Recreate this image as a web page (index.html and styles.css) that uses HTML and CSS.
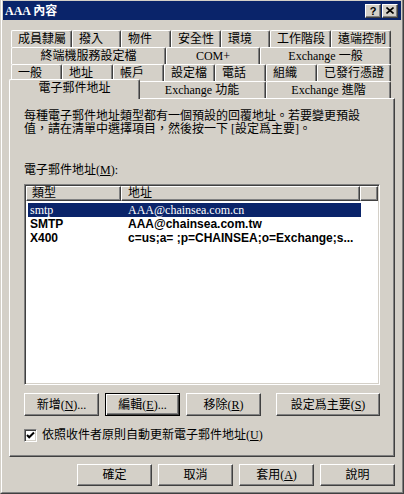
FILE: index.html
```html
<!DOCTYPE html>
<html lang="zh-Hant">
<head>
    <meta charset="UTF-8">
    <meta name="viewport" content="width=device-width, initial-scale=1.0">
    <title>AAA 內容</title>
    <link rel="stylesheet" href="styles.css">
</head>
<body>
    <div class="window">
        <div class="frame">
            <div class="titlebar">
                <span class="title">AAA 內容</span>
                <div class="caption-buttons">
                    <span class="cap-btn help">?</span>
                    <span class="cap-btn close">
                        <svg width="8" height="7" viewBox="0 0 8 7"><path d="M0.5 0.5L7.5 6.5M7.5 0.5L0.5 6.5" stroke="#000" stroke-width="1.6" fill="none"/></svg>
                    </span>
                </div>
            </div>

            <div class="content">
                <div class="tabs">
                    <div class="tab-row row-1">
                        <div class="tab">成員隸屬</div>
                        <div class="tab">撥入</div>
                        <div class="tab">物件</div>
                        <div class="tab">安全性</div>
                        <div class="tab">環境</div>
                        <div class="tab">工作階段</div>
                        <div class="tab">遠端控制</div>
                    </div>
                    <div class="tab-row row-2">
                        <div class="tab">終端機服務設定檔</div>
                        <div class="tab">COM+</div>
                        <div class="tab">Exchange 一般</div>
                    </div>
                    <div class="tab-row row-3">
                        <div class="tab">一般</div>
                        <div class="tab">地址</div>
                        <div class="tab">帳戶</div>
                        <div class="tab">設定檔</div>
                        <div class="tab">電話</div>
                        <div class="tab">組織</div>
                        <div class="tab">已發行憑證</div>
                    </div>
                    <div class="tab-row row-4">
                        <div class="tab active">電子郵件地址</div>
                        <div class="tab">Exchange 功能</div>
                        <div class="tab">Exchange 進階</div>
                    </div>
                </div>

                <div class="panel">
                    <p class="desc">每種電子郵件地址類型都有一個預設的回覆地址。若要變更預設<br>值，請在清單中選擇項目，然後按一下 [設定爲主要]。</p>

                    <div class="field-label">電子郵件地址(<u>M</u>):</div>

                    <div class="listview">
                        <div class="lv-header">
                            <div class="lv-col col-type">類型</div>
                            <div class="lv-col col-addr">地址</div>
                            <div class="lv-col col-fill"></div>
                        </div>
                        <div class="lv-body">
                            <div class="lv-row selected">
                                <span class="cell">smtp</span>
                                <span class="cell">AAA@chainsea.com.cn</span>
                            </div>
                            <div class="lv-row primary">
                                <span class="cell">SMTP</span>
                                <span class="cell">AAA@chainsea.com.tw</span>
                            </div>
                            <div class="lv-row primary">
                                <span class="cell">X400</span>
                                <span class="cell">c=us;a= ;p=CHAINSEA;o=Exchange;s...</span>
                            </div>
                        </div>
                    </div>

                    <div class="action-row">
                        <button class="btn">新增(<u>N</u>)...</button>
                        <button class="btn default">編輯(<u>E</u>)...</button>
                        <button class="btn">移除(<u>R</u>)</button>
                        <button class="btn wide">設定爲主要(<u>S</u>)</button>
                    </div>

                    <label class="check-row">
                        <span class="checkbox">
                            <svg width="9" height="9" viewBox="0 0 9 9"><path d="M1 4L3.2 6.3L8 1.5" stroke="#000" stroke-width="2" fill="none"/></svg>
                        </span>
                        <span>依照收件者原則自動更新電子郵件地址(<u>U</u>)</span>
                    </label>
                </div>

                <div class="dialog-buttons">
                    <button class="btn">確定</button>
                    <button class="btn">取消</button>
                    <button class="btn">套用(<u>A</u>)</button>
                    <button class="btn">說明</button>
                </div>
            </div>
        </div>
    </div>
</body>
</html>
```

FILE: styles.css
```css
body {
    margin: 0;
    background-color: #d4d0c8;
    font-family: "Liberation Serif", "Noto Sans CJK TC", serif;
    font-size: 12px;
    color: #000000;
}
.window {
    width: 404px;
    height: 494px;
    box-sizing: border-box;
    border-style: solid;
    border-width: 0 1px 1px 1px;
    border-color: #d4d0c8 #404040 #404040 #d4d0c8;
}
.frame {
    height: 100%;
    box-sizing: border-box;
    border-style: solid;
    border-width: 0 1px 1px 1px;
    border-color: #ffffff #808080 #808080 #ffffff;
    padding: 1px 1px 0 1px;
}
.titlebar {
    height: 19px;
    background-color: #0a246a;
    display: flex;
    align-items: center;
    padding: 0 3px 0 2px;
}
.title {
    color: #ffffff;
    font-weight: bold;
    line-height: 14px;
}
.caption-buttons {
    margin-left: auto;
    display: flex;
    gap: 1px;
}
.cap-btn {
    box-sizing: border-box;
    width: 16px;
    height: 14px;
    display: flex;
    align-items: center;
    justify-content: center;
    background-color: #d4d0c8;
    border: 1px solid;
    border-color: #ffffff #404040 #404040 #ffffff;
    box-shadow: inset -1px -1px #808080;
    font-family: "Liberation Sans", sans-serif;
    font-weight: bold;
    font-size: 11px;
    line-height: 12px;
}
.content {
    padding: 10px 6px 0 6px;
}

/* tabs */
.tabs {
    margin-left: 2px;
}
.tab-row {
    display: grid;
    height: 17px;
}
.row-1 {
    grid-template-columns: 61px 49px 50px 50px 49px 61px 60px;
}
.row-2 {
    grid-template-columns: 155px 94px 131px;
}
.row-3 {
    grid-template-columns: repeat(6, 51px) 74px;
}
.row-4 {
    grid-template-columns: 127px 128px 125px;
}
.tab {
    box-sizing: border-box;
    background-color: #d4d0c8;
    border-top: 1px solid #ffffff;
    border-left: 1px solid #ffffff;
    border-right: 1px solid #404040;
    box-shadow: inset -1px 0 #808080;
    border-radius: 2px 2px 0 0;
    line-height: 16px;
    white-space: nowrap;
    overflow: hidden;
}
.row-1 .tab,
.row-3 .tab {
    padding-left: 6px;
}
.row-2 .tab,
.row-4 .tab {
    text-align: center;
}
.tab.active {
    position: relative;
    z-index: 1;
    margin: -2px -2px -1px -2px;
    line-height: 17px;
}

/* page */
.panel {
    box-sizing: border-box;
    height: 359px;
    border: 1px solid;
    border-color: #ffffff #404040 #404040 #ffffff;
    box-shadow: inset -1px -1px #808080;
    padding: 11px 14px 0 14px;
}
.desc {
    margin: 0;
    line-height: 13px;
}
.field-label {
    margin-top: 28px;
    line-height: 12px;
}
.listview {
    box-sizing: border-box;
    height: 201px;
    margin-top: 8px;
    background-color: #ffffff;
    border: 1px solid;
    border-color: #808080 #ffffff #ffffff #808080;
    box-shadow: inset 1px 1px #404040, inset -1px -1px #d4d0c8;
    padding: 1px;
}
.lv-header {
    display: flex;
    height: 15px;
}
.lv-col {
    box-sizing: border-box;
    height: 15px;
    background-color: #d4d0c8;
    border: 1px solid;
    border-color: #ffffff #404040 #404040 #ffffff;
    box-shadow: inset -1px -1px #808080;
    padding-left: 5px;
    line-height: 13px;
    font-size: 12px;
}
.col-type {
    width: 95px;
}
.col-addr {
    width: 239px;
    padding-left: 6px;
}
.col-fill {
    flex: 1;
}
.lv-body {
    padding: 2px 0 0 2px;
}
.lv-row {
    display: grid;
    grid-template-columns: 93px 240px;
    width: 333px;
    height: 14px;
    line-height: 14px;
    white-space: nowrap;
}
.lv-row .cell {
    padding-left: 2px;
}
.lv-row .cell + .cell {
    padding-left: 7px;
}
.lv-row.selected {
    background-color: #0a246a;
    color: #ffffff;
}
.lv-row.primary {
    font-family: "Liberation Sans", sans-serif;
    font-weight: bold;
}

/* buttons */
.btn {
    box-sizing: border-box;
    width: 75px;
    height: 23px;
    padding: 0;
    display: flex;
    align-items: center;
    justify-content: center;
    background-color: #d4d0c8;
    border: 1px solid;
    border-color: #ffffff #404040 #404040 #ffffff;
    box-shadow: inset -1px -1px #808080;
    font-family: inherit;
    font-size: 12px;
    color: #000000;
    line-height: 14px;
}
.btn.default {
    border-color: #000000;
    box-shadow: inset 1px 1px #ffffff, inset -1px -1px #404040, inset -2px -2px #808080;
}
.btn.wide {
    width: 104px;
    margin-left: auto;
}
.action-row {
    display: flex;
    gap: 6px;
    margin-top: 8px;
}
.check-row {
    display: flex;
    align-items: center;
    gap: 5px;
    margin-top: 13px;
    line-height: 13px;
}
.checkbox {
    box-sizing: border-box;
    width: 13px;
    height: 13px;
    display: flex;
    align-items: center;
    justify-content: center;
    background-color: #ffffff;
    border: 1px solid;
    border-color: #808080 #ffffff #ffffff #808080;
    box-shadow: inset 1px 1px #404040, inset -1px -1px #d4d0c8;
}
.dialog-buttons {
    display: flex;
    justify-content: flex-end;
    gap: 6px;
    margin-top: 7px;
}
.dialog-buttons .btn {
    height: 22px;
}
```
